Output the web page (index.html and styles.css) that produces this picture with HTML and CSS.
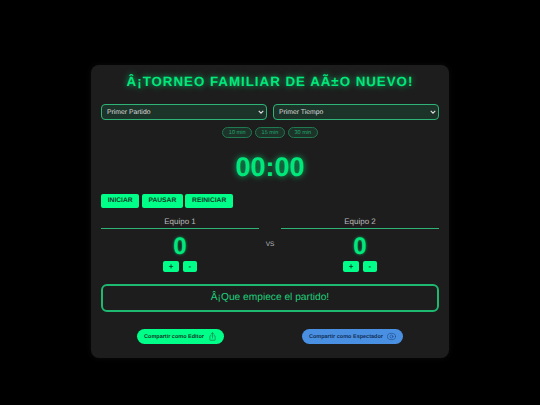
FILE: index.html
```html
<!DOCTYPE html>
<html lang="en">
<head>
    <meta charset="UTF-8">
    <meta name="viewport" content="width=device-width, initial-scale=1.0">
    <title>Torneo Familiar</title>
    <link rel="stylesheet" href="styles.css">
</head>
<body>
    <div class="card">
        <h1 class="title">Â¡TORNEO FAMILIAR DE AÃ±O NUEVO!</h1>

        <div class="selects">
            <select class="select">
                <option>Primer Partido</option>
            </select>
            <select class="select">
                <option>Primer Tiempo</option>
            </select>
        </div>

        <div class="presets">
            <button class="preset">10 min</button>
            <button class="preset">15 min</button>
            <button class="preset">30 min</button>
        </div>

        <div class="timer">00:00</div>

        <div class="controls">
            <button class="btn">INICIAR</button>
            <button class="btn">PAUSAR</button>
            <button class="btn">REINICIAR</button>
        </div>

        <div class="teams">
            <div class="team">
                <div class="team-name">Equipo 1</div>
                <div class="score">0</div>
                <div class="score-btns">
                    <button class="btn-small">+</button>
                    <button class="btn-small">-</button>
                </div>
            </div>
            <div class="vs">VS</div>
            <div class="team">
                <div class="team-name">Equipo 2</div>
                <div class="score">0</div>
                <div class="score-btns">
                    <button class="btn-small">+</button>
                    <button class="btn-small">-</button>
                </div>
            </div>
        </div>

        <div class="message">Â¡Que empiece el partido!</div>

        <div class="share">
            <button class="share-btn share-editor">
                Compartir como Editor
                <svg class="share-icon" viewBox="0 0 24 24" fill="none" stroke="#0a7a4c" stroke-width="1.8" stroke-linecap="round" stroke-linejoin="round">
                    <path d="M8 10H6a1 1 0 0 0-1 1v10a1 1 0 0 0 1 1h12a1 1 0 0 0 1-1V11a1 1 0 0 0-1-1h-2"/>
                    <path d="M12 16V2"/>
                    <path d="M8 6l4-4 4 4"/>
                </svg>
            </button>
            <button class="share-btn share-viewer">
                Compartir como Espectador
                <svg class="share-icon" viewBox="0 0 24 24" fill="none" stroke="#1f4f8f" stroke-width="1.8" stroke-linecap="round" stroke-linejoin="round">
                    <ellipse cx="12" cy="12" rx="11" ry="8.5"/>
                    <circle cx="12" cy="12" r="4"/>
                </svg>
            </button>
        </div>
    </div>
</body>
</html>
```

FILE: styles.css
```css
* {
    margin: 0;
    padding: 0;
    box-sizing: border-box;
    text-rendering: geometricPrecision;
}

body {
    font-family: "Liberation Sans", Arial, sans-serif;
    background-color: #000;
    color: #ccc;
    height: 405px;
    overflow: hidden;
    display: flex;
    justify-content: center;
    padding-top: 65px;
}

.card {
    width: 358px;
    height: 293px;
    background: #1d1d1d;
    border-radius: 8px;
    padding: 8px 10px;
    box-shadow: 0 0 6px rgba(255,255,255,0.05);
}

.title {
    height: 18px;
    line-height: 18px;
    font-size: 13.3px;
    font-weight: bold;
    letter-spacing: 1px;
    text-align: center;
    white-space: nowrap;
    color: #00e87c;
    text-shadow: 0 0 6px rgba(0,255,136,0.7);
}

.selects {
    display: flex;
    gap: 6px;
    margin-top: 13px;
}

.select {
    flex: 1;
    height: 16px;
    padding: 0 5px;
    font-family: inherit;
    font-size: 6.8px;
    color: #ddd;
    appearance: none;
    background: #1c3329 url("data:image/svg+xml,%3Csvg xmlns='http://www.w3.org/2000/svg' viewBox='0 0 8 8'%3E%3Cpath d='M1 2.5l3 3 3-3' fill='none' stroke='%23ddd' stroke-width='1.6'/%3E%3C/svg%3E") no-repeat right 2px center / 6px 6px;
    border: 1px solid #2fb377;
    border-radius: 4px;
}

.presets {
    display: flex;
    justify-content: center;
    gap: 3px;
    margin-top: 7px;
}

.preset {
    height: 11px;
    padding: 0 5.5px;
    font-family: inherit;
    font-size: 5.6px;
    color: #1fa86a;
    background: #1d3229;
    border: 1px solid #1f7a50;
    border-radius: 6px;
}

.timer {
    height: 34px;
    line-height: 34px;
    margin-top: 12px;
    font-size: 27px;
    font-weight: bold;
    text-align: center;
    color: #00e87c;
    text-shadow: 0 0 6px rgba(0,255,136,0.7);
}

.controls {
    display: flex;
    gap: 2.5px;
    margin-top: 9.5px;
}

.btn {
    height: 14.5px;
    padding: 0 6.7px;
    font-family: inherit;
    font-size: 6.7px;
    font-weight: bold;
    color: #0b3d28;
    background: #00ff88;
    border: none;
    border-radius: 2px;
}

.teams {
    display: flex;
    justify-content: space-between;
    margin-top: 8px;
}

.team {
    width: 158px;
    text-align: center;
}

.team-name {
    height: 13px;
    line-height: 12px;
    font-size: 8px;
    color: #bbb;
    border-bottom: 1px solid #2fb377;
}

.score {
    height: 24px;
    line-height: 24px;
    margin-top: 6px;
    font-size: 24px;
    font-weight: bold;
    color: #00e87c;
    text-shadow: 0 0 3px rgba(0,255,136,0.6);
}

.score-btns {
    display: flex;
    justify-content: center;
    gap: 4.5px;
    margin-top: 2px;
}

.btn-small {
    height: 11px;
    padding: 0 5.3px;
    font-family: inherit;
    font-size: 8px;
    font-weight: bold;
    color: #0b3d28;
    background: #00ff88;
    border: none;
    border-radius: 2px;
}

.vs {
    margin-top: 25px;
    font-size: 6.5px;
    color: #bbb;
}

.message {
    height: 28px;
    line-height: 24px;
    margin-top: 12px;
    font-size: 10.2px;
    text-align: center;
    color: #1fd07c;
    border: 2px solid #1fb870;
    border-radius: 6px;
}

.share {
    display: flex;
    justify-content: center;
    gap: 78px;
    margin-top: 17px;
}

.share-btn {
    height: 15px;
    display: flex;
    align-items: center;
    gap: 4px;
    padding: 0 7px;
    font-family: inherit;
    font-size: 5.5px;
    font-weight: bold;
    border: none;
    border-radius: 8px;
    white-space: nowrap;
}

.share-editor {
    background: #00ff88;
    color: #0b3d28;
}

.share-viewer {
    background: #4a90e2;
    color: #12305a;
}

.share-icon {
    width: 9px;
    height: 9px;
}
```
